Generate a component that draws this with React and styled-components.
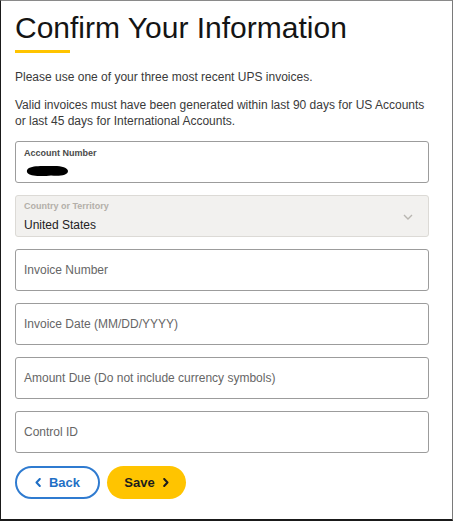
import React from "react";
import styled, { createGlobalStyle } from "styled-components";

const GlobalStyle = createGlobalStyle`
  html, body { margin: 0; padding: 0; background: #ffffff; }
  * { box-sizing: border-box; }
`;

const Frame = styled.div`
  width: 453px;
  height: 521px;
  border-top: 1px solid #8a8a8a;
  border-left: 1px solid #1a1a1a;
  border-right: 1px solid #7a7a7a;
  border-bottom: 2px solid #1a1a1a;
  padding: 9px 23px 0 14px;
  font-family: "Liberation Sans", Arial, sans-serif;
  display: flex;
  flex-direction: column;
`;

const Title = styled.h1`
  margin: 0;
  font-size: 30px;
  line-height: 36px;
  font-weight: 400;
  color: #141414;
`;

const Accent = styled.div`
  width: 55px;
  height: 3px;
  background: #ffc400;
  margin-top: 4px;
`;

const Intro = styled.p`
  margin: ${(p) => (p.$first ? "16px" : "12px")} 0 0;
  font-size: 12px;
  line-height: 16px;
  color: #3a3a3a;
`;

const Form = styled.div`
  margin-top: 12px;
  display: flex;
  flex-direction: column;
  gap: 12px;
`;

const Field = styled.div`
  height: 42px;
  border: 1px solid ${(p) => (p.$disabled ? "#dcdad6" : "#9c9c9c")};
  background: ${(p) => (p.$disabled ? "#f2f1ef" : "#ffffff")};
  border-radius: 3px;
  padding: 0 8px;
  display: flex;
  align-items: center;
  justify-content: space-between;
`;

const Stack = styled.div`
  display: flex;
  flex-direction: column;
  padding-top: ${(p) => p.$pt || 0}px;
  align-self: stretch;
`;

const SmallLabel = styled.span`
  font-size: 9px;
  line-height: 12px;
  font-weight: 700;
  color: ${(p) => (p.$muted ? "#b3afa9" : "#4a4a4a")};
`;

const Value = styled.span`
  font-size: 12px;
  line-height: 16px;
  color: #222222;
  margin-top: ${(p) => p.$mt || 0}px;
`;

const Placeholder = styled.span`
  font-size: 12px;
  line-height: 16px;
  color: #666666;
`;

const Redaction = styled.svg`
  margin-top: 6px;
  margin-left: 2px;
  display: block;
`;

const Chevron = styled.svg`
  margin-right: 7px;
  margin-top: 2px;
`;

const Actions = styled.div`
  margin-top: 13px;
  display: flex;
  gap: 7px;
`;

const Button = styled.button`
  height: 33px;
  width: ${(p) => p.$w}px;
  border-radius: 17px;
  font-family: "Liberation Sans", Arial, sans-serif;
  font-size: 13px;
  font-weight: 700;
  display: flex;
  align-items: center;
  justify-content: center;
  gap: 8px;
  padding: 0;
  cursor: pointer;
  border: ${(p) => (p.$primary ? "none" : "2px solid #2f7bd0")};
  background: ${(p) => (p.$primary ? "#ffc400" : "#ffffff")};
  color: ${(p) => (p.$primary ? "#1d1d1d" : "#1f6fc5")};
`;

const Caret = ({ dir, color }) => (
  <svg width="6" height="9" viewBox="0 0 6 9">
    <path
      d={dir === "left" ? "M4.8 1 L1.5 4.5 L4.8 8" : "M1.2 1 L4.5 4.5 L1.2 8"}
      fill="none"
      stroke={color}
      strokeWidth="2"
      strokeLinecap="round"
      strokeLinejoin="round"
    />
  </svg>
);

const fields = [
  "Invoice Number",
  "Invoice Date (MM/DD/YYYY)",
  "Amount Due (Do not include currency symbols)",
  "Control ID",
];

export default function App() {
  return (
    <>
      <GlobalStyle />
      <Frame>
        <Title>Confirm Your Information</Title>
        <Accent />
        <Intro $first>Please use one of your three most recent UPS invoices.</Intro>
        <Intro>
          Valid invoices must have been generated within last 90 days for US Accounts
          or last 45 days for International Accounts.
        </Intro>
        <Form>
          <Field>
            <Stack $pt={5}>
              <SmallLabel>Account Number</SmallLabel>
              <Redaction width="43" height="12" viewBox="0 0 43 12">
                <path
                  d="M3 3 C8 0.5 18 1 26 1 C34 0.5 42 2.5 42 6 C42 10.5 33 11.5 25 10.5 C17 11.5 6 11.5 2 8.5 C0 6.5 1 4 3 3 Z"
                  fill="#000"
                />
              </Redaction>
            </Stack>
          </Field>
          <Field $disabled>
            <Stack $pt={4}>
              <SmallLabel $muted>Country or Territory</SmallLabel>
              <Value $mt={5}>United States</Value>
            </Stack>
            <Chevron width="10" height="6" viewBox="0 0 10 6">
              <path d="M1 1 L5 5 L9 1" fill="none" stroke="#b9b6b1" strokeWidth="1.4" />
            </Chevron>
          </Field>
          {fields.map((f) => (
            <Field key={f}>
              <Placeholder>{f}</Placeholder>
            </Field>
          ))}
        </Form>
        <Actions>
          <Button $w={85}>
            <Caret dir="left" color="#1f6fc5" />
            Back
          </Button>
          <Button $w={79} $primary>
            Save
            <Caret dir="right" color="#1d1d1d" />
          </Button>
        </Actions>
      </Frame>
    </>
  );
}
